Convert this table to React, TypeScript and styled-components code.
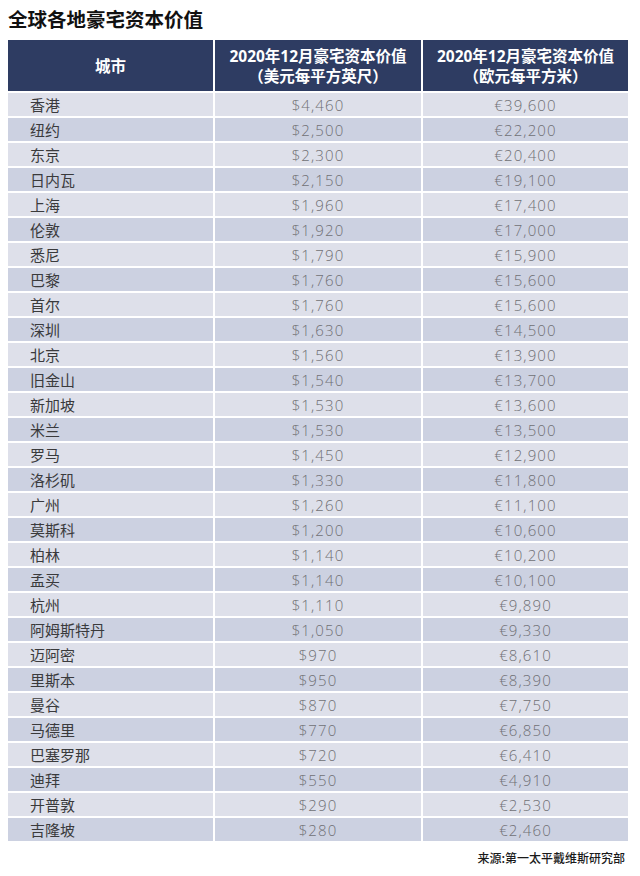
import React from "react";
import styled, { createGlobalStyle } from "styled-components";

const GlobalStyle = createGlobalStyle`
  html, body { margin: 0; padding: 0; background: #ffffff; }
  body { font-family: "Noto Sans CJK SC", "Noto Sans", sans-serif; }
`;

const Page = styled.div`
  width: 640px;
  box-sizing: border-box;
  padding: 5px 12px 0 8px;
`;

const Title = styled.h1`
  margin: 0 0 7px 0;
  font-size: 19.5px;
  line-height: 28px;
  font-weight: 700;
  color: #111111;
  letter-spacing: 0;
`;

const Grid = styled.div`
  display: grid;
  grid-template-columns: 205px 206px 205px;
  grid-auto-rows: 23px;
  grid-template-rows: 51px;
  column-gap: 2px;
  row-gap: 2px;
`;

const HeadCell = styled.div`
  background: #2e3c62;
  color: #ffffff;
  font-family: "Open Sans", "Noto Sans CJK SC", sans-serif;
  font-weight: 700;
  font-size: 15.5px;
  display: flex;
  flex-direction: column;
  align-items: center;
  justify-content: center;
  text-align: center;
`;

const HeadLine = styled.div`
  line-height: 20px;
  height: 20px;
  white-space: nowrap;
`;

const Cell = styled.div<{ $alt: boolean; $num?: boolean }>`
  background: ${(p) => (p.$alt ? "#ccd1e1" : "#dee0ea")};
  display: flex;
  align-items: center;
  justify-content: ${(p) => (p.$num ? "center" : "flex-start")};
  padding-left: ${(p) => (p.$num ? "0" : "22px")};
  font-size: 15px;
  font-family: ${(p) =>
    p.$num
      ? '"Open Sans", sans-serif'
      : '"Noto Sans CJK SC", sans-serif'};
  font-weight: ${(p) => (p.$num ? 300 : 400)};
  color: ${(p) => (p.$num ? "#707075" : "#3a3a3c")};
  letter-spacing: ${(p) => (p.$num ? "1.1px" : "0")};
`;

const Source = styled.div`
  margin-top: 8px;
  text-align: right;
  padding-right: 3px;
  font-size: 12px;
  line-height: 17px;
  color: #1a1a1a;
  font-weight: 500;
`;

const rows: [string, string, string][] = [
  ["香港", "$4,460", "€39,600"],
  ["纽约", "$2,500", "€22,200"],
  ["东京", "$2,300", "€20,400"],
  ["日内瓦", "$2,150", "€19,100"],
  ["上海", "$1,960", "€17,400"],
  ["伦敦", "$1,920", "€17,000"],
  ["悉尼", "$1,790", "€15,900"],
  ["巴黎", "$1,760", "€15,600"],
  ["首尔", "$1,760", "€15,600"],
  ["深圳", "$1,630", "€14,500"],
  ["北京", "$1,560", "€13,900"],
  ["旧金山", "$1,540", "€13,700"],
  ["新加坡", "$1,530", "€13,600"],
  ["米兰", "$1,530", "€13,500"],
  ["罗马", "$1,450", "€12,900"],
  ["洛杉矶", "$1,330", "€11,800"],
  ["广州", "$1,260", "€11,100"],
  ["莫斯科", "$1,200", "€10,600"],
  ["柏林", "$1,140", "€10,200"],
  ["孟买", "$1,140", "€10,100"],
  ["杭州", "$1,110", "€9,890"],
  ["阿姆斯特丹", "$1,050", "€9,330"],
  ["迈阿密", "$970", "€8,610"],
  ["里斯本", "$950", "€8,390"],
  ["曼谷", "$870", "€7,750"],
  ["马德里", "$770", "€6,850"],
  ["巴塞罗那", "$720", "€6,410"],
  ["迪拜", "$550", "€4,910"],
  ["开普敦", "$290", "€2,530"],
  ["吉隆坡", "$280", "€2,460"],
];

export default function App() {
  return (
    <>
      <GlobalStyle />
      <Page>
        <Title>全球各地豪宅资本价值</Title>
        <Grid>
          <HeadCell>
            <HeadLine>城市</HeadLine>
          </HeadCell>
          <HeadCell>
            <HeadLine>2020年12月豪宅资本价值</HeadLine>
            <HeadLine>（美元每平方英尺）</HeadLine>
          </HeadCell>
          <HeadCell>
            <HeadLine>2020年12月豪宅资本价值</HeadLine>
            <HeadLine>（欧元每平方米）</HeadLine>
          </HeadCell>
          {rows.map(([city, usd, eur], i) => (
            <React.Fragment key={city + i}>
              <Cell $alt={i % 2 === 1}>{city}</Cell>
              <Cell $alt={i % 2 === 1} $num>
                {usd}
              </Cell>
              <Cell $alt={i % 2 === 1} $num>
                {eur}
              </Cell>
            </React.Fragment>
          ))}
        </Grid>
        <Source>来源:第一太平戴维斯研究部</Source>
      </Page>
    </>
  );
}
